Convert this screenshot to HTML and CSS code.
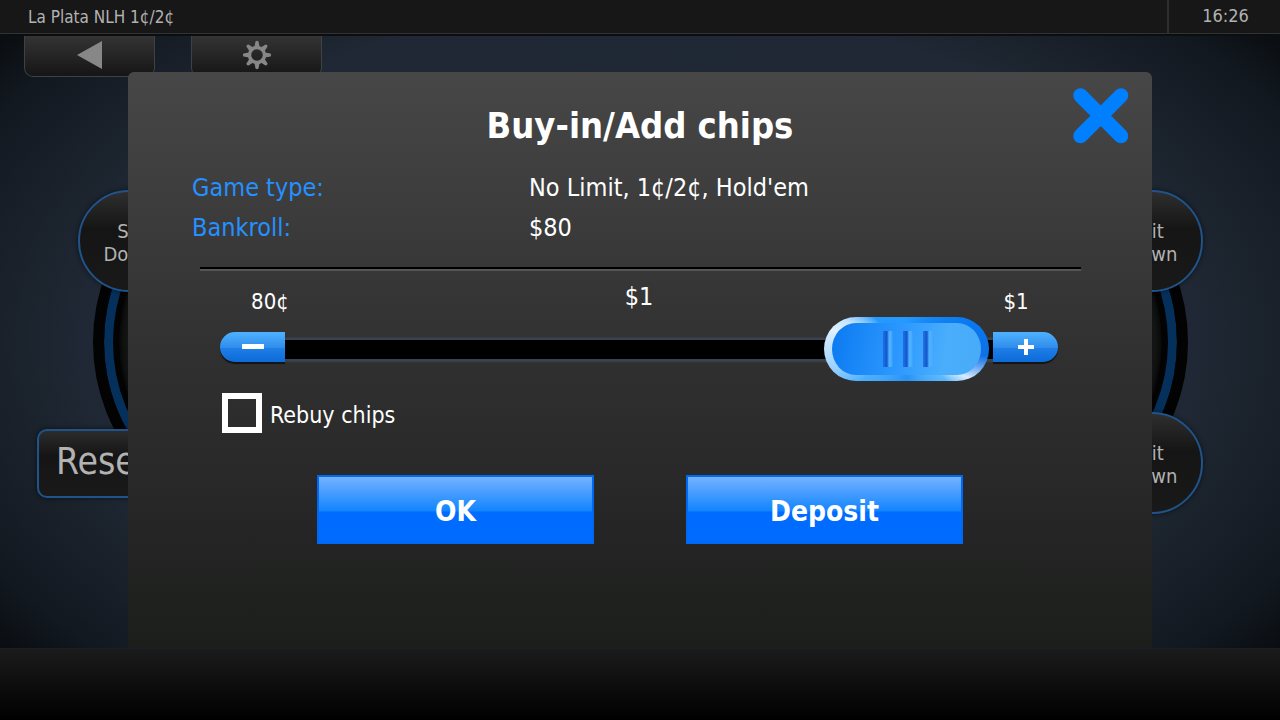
FILE: index.html
```html
<!DOCTYPE html>
<html lang="en">
<head>
<meta charset="utf-8">
<title>La Plata NLH 1¢/2¢</title>
<link rel="stylesheet" href="styles.css">
</head>
<body>
<div class="app">
  <header class="topbar">
    <span class="table-name">La Plata NLH 1¢/2¢</span>
    <time class="clock">16:26</time>
  </header>
  <main class="room">
    <nav class="tabs">
      <button class="tab" type="button" aria-label="Back">
        <svg width="26" height="30" viewBox="0 0 26 30"><path d="M0 15 L25 1 V29 Z" fill="#878787"/></svg>
      </button>
      <button class="tab" type="button" aria-label="Settings">
        <svg width="30" height="30" viewBox="-15 -15 30 30">
          <g fill="#878787">
            <path id="tooth" d="M-2.600 -8 L-1.500 -13.500 Q0 -15 1.500 -13.500 L2.600 -8 Z"/>
            <use href="#tooth" transform="rotate(45)"/><use href="#tooth" transform="rotate(90)"/>
            <use href="#tooth" transform="rotate(135)"/><use href="#tooth" transform="rotate(180)"/>
            <use href="#tooth" transform="rotate(225)"/><use href="#tooth" transform="rotate(270)"/>
            <use href="#tooth" transform="rotate(315)"/>
          </g>
          <circle r="7.5" fill="none" stroke="#878787" stroke-width="3.400"/>
        </svg>
      </button>
    </nav>
    <div class="felt"></div>
    <button class="seat seat-left" type="button">Sit<br>Down</button>
    <button class="seat seat-right" type="button">Sit<br>Down</button>
    <button class="seat seat-right seat-low" type="button">Sit<br>Down</button>
    <div class="reserve">Reserved</div>
  </main>
  <footer class="bottombar"></footer>

  <form class="dialog" role="dialog" aria-labelledby="title">
    <button class="close" type="button" aria-label="Close">
      <svg width="56" height="56" viewBox="0 0 56 56"><path d="M7.500 7.500 L48 48 M48 7.500 L7.500 48" stroke="#007fff" stroke-width="14.500" stroke-linecap="round"/></svg>
    </button>
    <h1 class="title" id="title">Buy-in/Add chips</h1>
    <dl class="facts">
      <dt>Game type:</dt><dd>No Limit, 1¢/2¢, Hold'em</dd>
      <dt>Bankroll:</dt><dd>$80</dd>
    </dl>
    <hr class="rule">
    <div class="amounts">
      <span class="limit">80¢</span>
      <output class="amount" for="chips">$1</output>
      <span class="limit">$1</span>
    </div>
    <div class="slider">
      <button class="step step-minus" type="button" aria-label="Less"><svg width="22" height="18" viewBox="0 0 22 18"><path d="M0 6 H22 V11 H0 Z" fill="#fff"/></svg></button>
      <input class="range" id="chips" type="range" min="80" max="100" value="100" aria-label="Chips to buy">
      <button class="step step-plus" type="button" aria-label="More"><svg width="16" height="16" viewBox="0 0 16 16"><path d="M0 8 H16 M8 0 V16" stroke="#fff" stroke-width="4"/></svg></button>
    </div>
    <label class="rebuy"><input class="tick" type="checkbox"><span class="rebuy-text">Rebuy chips</span></label>
    <div class="actions">
      <button class="action" type="submit">OK</button>
      <button class="action" type="button">Deposit</button>
    </div>
  </form>
</div>
</body>
</html>
```
FILE: styles.css
```css
* { box-sizing: border-box; }
body { margin: 0; background: #000; }
body, button, input { font-family: "DejaVu Sans Condensed", "DejaVu Sans", sans-serif; }
button { border: 0; padding: 0; }
svg { display: block; }

.app {
  position: relative;
  display: flex;
  flex-direction: column;
  min-height: 100vh;
  overflow: hidden;
}
.topbar {
  display: flex;
  justify-content: space-between;
  height: 34px;
  background: #171717;
  border-bottom: 1px solid #2f3336;
  color: #b2b2b2;
  font-size: 17px;
  line-height: 34px;
}
.table-name { padding-left: 28px; }
.clock {
  width: 113px;
  padding-left: 2px;
  border-left: 2px solid #2b2f32;
  text-align: center;
  font-size: 18px;
  line-height: 32px;
}
.room {
  position: relative;
  flex: 1;
  background: radial-gradient(ellipse 62% 78% at 50% 50%, #222c3a 0%, #1f2834 70%, #192029 82%, #121820 94%, #090c0f 104%);
  border-top: 2px solid #0b0d0f;
}
.tabs { display: flex; gap: 36px; padding-left: 24px; }
.tab {
  display: flex;
  justify-content: center;
  width: 131px;
  height: 41px;
  padding-top: 4px;
  border: 1px solid #3f4244;
  border-top: 0;
  border-radius: 0 0 9px 9px;
  background: linear-gradient(#343434, #151515);
}

.felt {
  position: absolute;
  left: 93px;
  right: 92px;
  top: 116px;
  height: 380px;
  border: 11px solid #030303;
  border-radius: 190px;
  background: #141615;
  box-shadow: inset 0 0 0 9px #06305c, inset 0 0 0 15px #030303, inset 0 0 6px 17px #030303;
}
.seat {
  position: absolute;
  top: 154px;
  width: 102px;
  height: 102px;
  padding-top: 4px;
  border: 2px solid #1f5389;
  border-radius: 50%;
  background: linear-gradient(#2e2e2e, #151515 38%, #191919);
  box-shadow: 0 0 4px 1px #0006;
  color: #b2b2b2;
  font-size: 20px;
  line-height: 23px;
}
.seat-left { left: 78px; }
.seat-right { right: 77px; }
.seat-low { top: 376px; }
.reserve {
  position: absolute;
  left: 37px;
  top: 393px;
  width: 240px;
  height: 69px;
  padding-left: 17px;
  border: 2px solid #1f5389;
  border-radius: 10px;
  background: linear-gradient(#2c2c2c, #151515 38%, #191919);
  box-shadow: 0 0 4px 1px #0006;
  color: #b2b2b2;
  font-size: 37px;
  line-height: 62px;
}
.bottombar {
  height: 72px;
  border-top: 1px solid #18202a;
  background: linear-gradient(#1a1b1a, #000);
}

.dialog {
  position: absolute;
  top: 72px;
  bottom: 72px;
  left: 10%;
  right: 10%;
  padding: 29px 64px 0;
  border-radius: 6px 6px 2px 2px;
  background: linear-gradient(#474747, #303030 50%, #1c1e1c);
  color: #fff;
}
.close {
  position: absolute;
  top: 16px;
  right: 23px;
  background: none;
}
.title {
  margin: 0;
  text-align: center;
  font-size: 36px;
  line-height: 50px;
}
.facts {
  display: grid;
  grid-template-columns: 337px 1fr;
  margin: 17px 0 0;
  font-size: 25px;
  line-height: 40px;
}
.facts dt { color: #2590ff; }
.facts dd { margin: 0; }
.rule {
  height: 4px;
  margin: 19px 7px 0 8px;
  border: 0;
  border-top: 2px solid #000;
  border-bottom: 2px solid #565656;
}
.amounts {
  display: grid;
  grid-template-columns: 92px 1fr 92px;
  margin: 10px 30px 0 28px;
  text-align: center;
}
.limit { padding: 6px 0 0 8px; font-size: 22px; line-height: 30px; }
.amount { font-size: 25px; line-height: 32px; }
.slider {
  display: flex;
  align-items: center;
  margin: 0 30px 0 28px;
}
.step {
  display: flex;
  align-items: center;
  justify-content: center;
  width: 65px;
  height: 30px;
  margin-bottom: 4px;
  background: linear-gradient(#4eb2ff, #2f8bea 54%, #1f7de6 55%, #0b6bd8);
  box-shadow: 0 2px 1px #0009;
}
.step-minus { border-radius: 15px 0 0 15px; }
.step-plus { border-radius: 0 15px 15px 0; }
.range {
  appearance: none;
  flex: 1;
  min-width: 0;
  height: 64px;
  margin: 0;
  padding-right: 4px;
  background: linear-gradient(transparent 20px, #3a4250 21px 23px, #000 23px 42px, #3a4250 42px 44px, transparent 46px);
}
.range::-webkit-slider-thumb {
  appearance: none;
  width: 165px;
  height: 64px;
  border: 6px solid transparent;
  border-width: 6px 8px;
  border-radius: 32px;
  background:
    linear-gradient(90deg, #1b63d6cc 1px, #1459d0 3px 4px, #4eb0ff 6px 8px, transparent 10px) 51px 50% / 10px 36px no-repeat padding-box,
    linear-gradient(90deg, #1b63d6cc 1px, #1459d0 3px 4px, #4eb0ff 6px 8px, transparent 10px) 71px 50% / 10px 36px no-repeat padding-box,
    linear-gradient(90deg, #1b63d6cc 1px, #1459d0 3px 4px, #4eb0ff 6px 8px, transparent 10px) 91px 50% / 10px 36px no-repeat padding-box,
    linear-gradient(100deg, #0b7af0, #2c98ff 45%, #4aaefc 75%, #48abf8) padding-box,
    conic-gradient(#249aff, #0878f0 70deg, #0f70e5 95deg, #d8ebff 115deg, #5cb8ff 128deg, #2793f5 180deg, #4caeff 235deg, #9ad0ff 255deg, #e0f1ff 285deg, #c5e5ff 295deg, #249aff 315deg) border-box;
}
.rebuy {
  display: flex;
  align-items: center;
  gap: 8px;
  width: fit-content;
  margin: 12px 0 0 30px;
  font-size: 23px;
  line-height: 30px;
}
.rebuy-text { padding-top: 4px; }
.tick {
  appearance: none;
  width: 40px;
  height: 40px;
  margin: 0;
  border: 6px solid #fff;
}
.tick:checked { background: #007fff; }
.actions {
  display: flex;
  justify-content: center;
  gap: 92px;
  margin-top: 42px;
}
.action {
  width: 277px;
  height: 69px;
  padding-top: 4px;
  border: 2px solid #0068f5;
  background: linear-gradient(#74b2ff, #1285ff 34px, #006bff 35px);
  color: #fff;
  font-size: 28px;
  font-weight: bold;
}
```
